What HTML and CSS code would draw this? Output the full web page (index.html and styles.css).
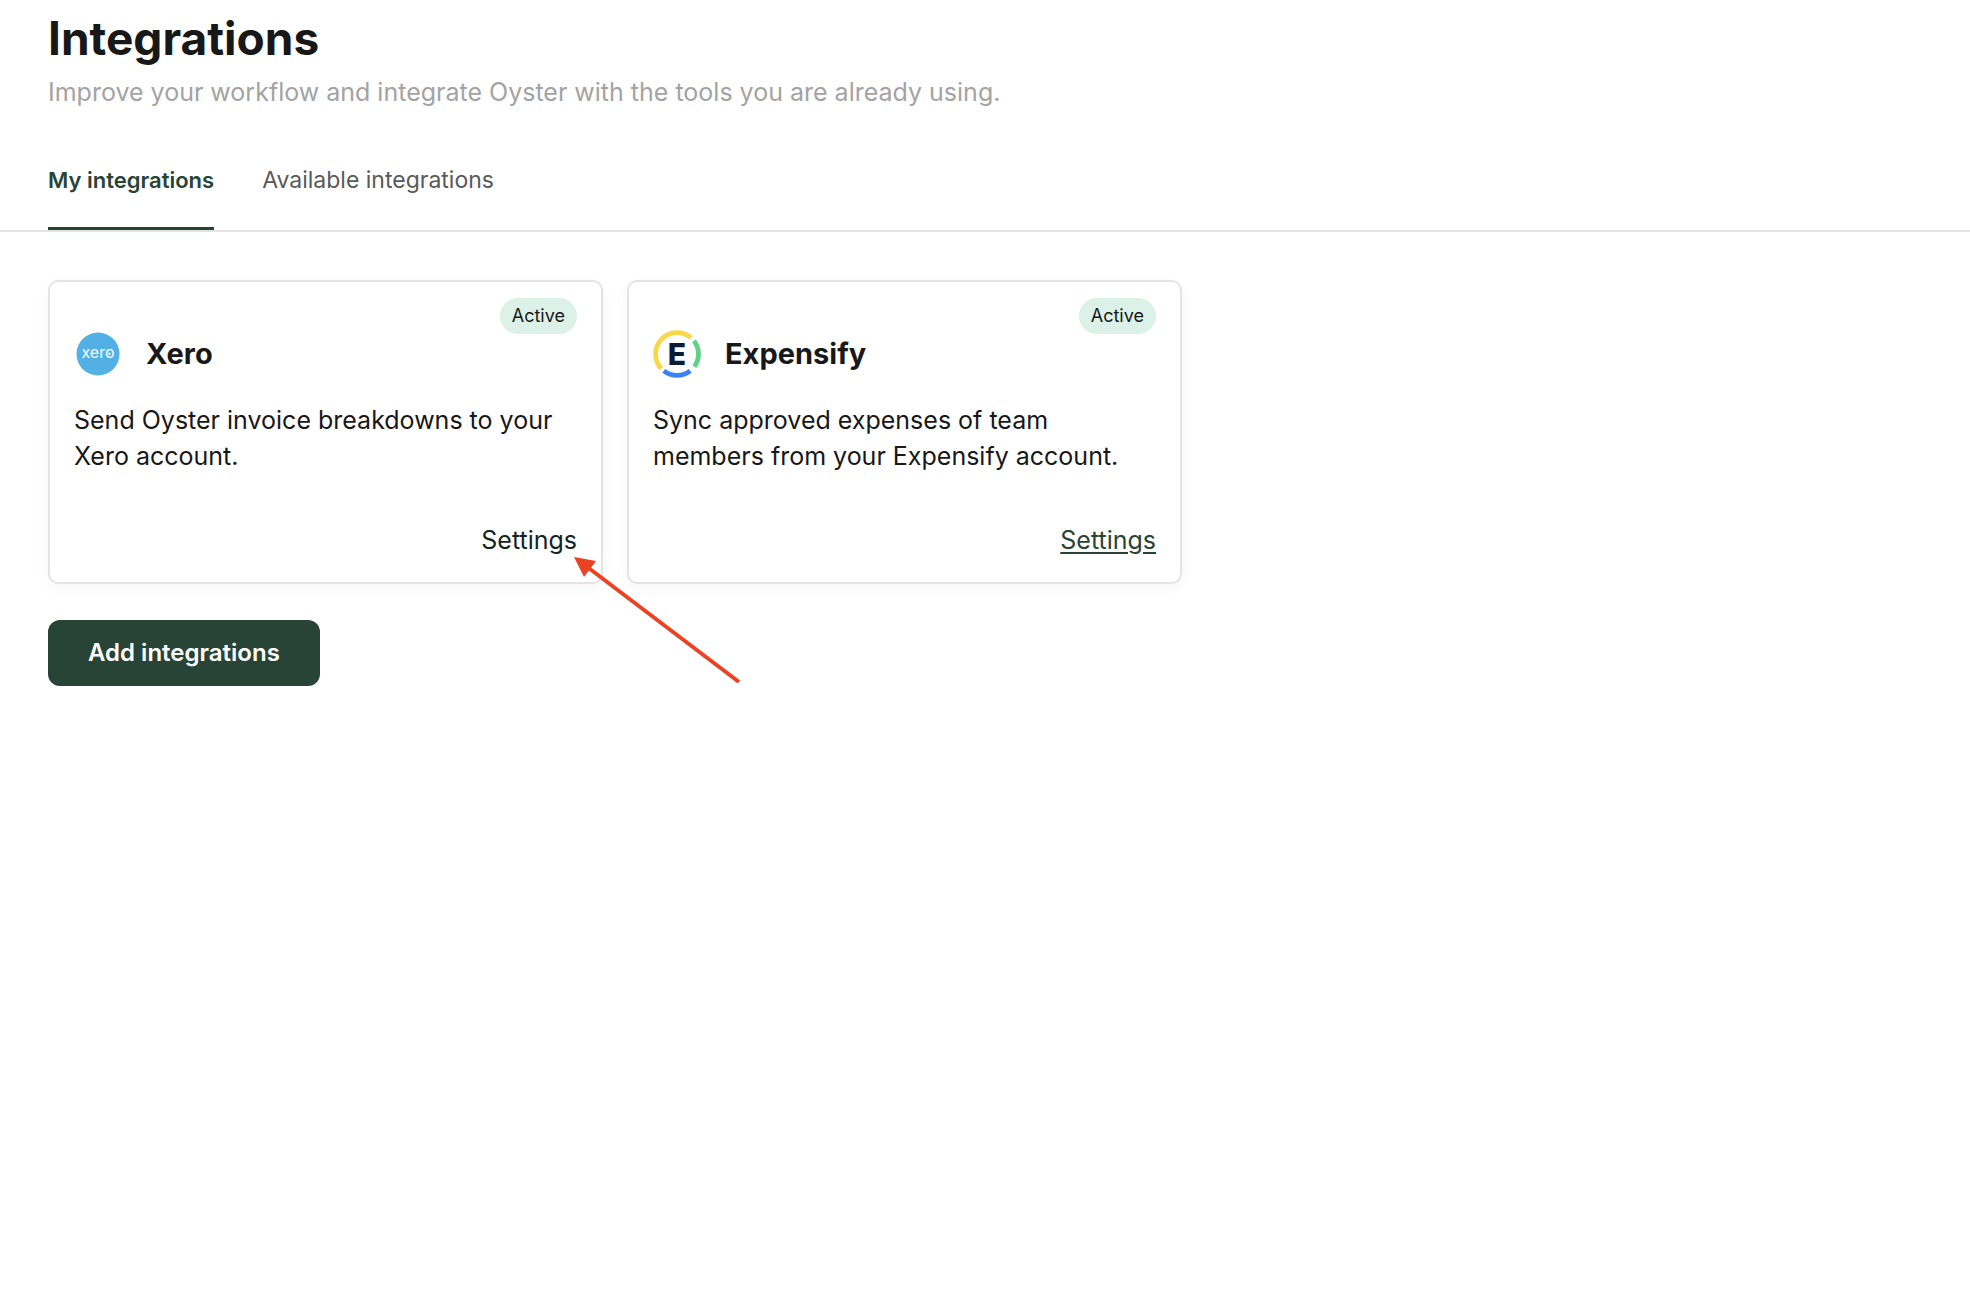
FILE: index.html
```
<!DOCTYPE html>
<html lang="en">

<head>
    <meta charset="utf-8" />
    <meta name="viewport" content="width=device-width, initial-scale=1.0">
    <title>Integrations</title>
    <link rel="stylesheet" href="styles.css">
</head>

<body>
    <header class="page-header">
        <h1 class="title">Integrations</h1>
        <p class="subtitle">Improve your workflow and integrate Oyster with the tools you are already using.</p>
    </header>

    <nav class="tabs">
        <a class="tab active" href="#my" aria-current="page">My integrations</a>
        <a class="tab" href="#available">Available integrations</a>
    </nav>

    <main class="content">
        <div class="cards">
            <article class="card">
                <span class="badge">Active</span>
                <div class="card-head">
                    <svg class="logo" viewBox="0 0 48 48" aria-hidden="true">
                        <circle cx="24" cy="24" r="21.5" fill="#52b0e5" />
                        <text class="xero-mark" x="24" y="28" text-anchor="middle">xero</text>
                        <circle cx="35.500" cy="23.700" r="1.200" fill="#fff" />
                    </svg>
                    <h2 class="name">Xero</h2>
                </div>
                <p class="description">Send Oyster invoice breakdowns to your Xero account.</p>
                <a class="settings hovered" href="#xero">Settings</a>
                <!-- arrow to the settings link -->
                <svg class="arrow" viewBox="0 0 170 130" aria-hidden="true">
                    <path d="M12 9L165 125" stroke="#ec4224" stroke-width="4" />
                    <path d="M0 0L22 4L10 20Z" fill="#ec4224" />
                </svg>
            </article>

            <article class="card">
                <span class="badge">Active</span>
                <div class="card-head">
                    <svg class="logo" viewBox="0 0 48 48" aria-hidden="true">
                        <g fill="none" stroke-width="4.8">
                            <path d="M8.300 38.700A21.500 21.500 0 0 1 38.100 7.800" stroke="#f8d849" />
                            <path d="M40.900 10.800A21.500 21.500 0 0 1 41.400 36.600" stroke="#5fd287" />
                            <path d="M10.800 40.900A21.500 21.500 0 0 0 37.200 40.900" stroke="#3b82f6" />
                        </g>
                        <text class="expensify-mark" x="24" y="35" text-anchor="middle">E</text>
                    </svg>
                    <h2 class="name">Expensify</h2>
                </div>
                <p class="description">Sync approved expenses of team members from your Expensify account.</p>
                <a class="settings" href="#expensify">Settings</a>
            </article>
        </div>

        <button class="add" type="button">Add integrations</button>
    </main>
</body>

</html>
```

FILE: styles.css
```
* {
    box-sizing: border-box;
}

body {
    margin: 0;
    background: #fff;
    color: #181818;
    font-family: Inter, "Liberation Sans", sans-serif;
    font-size: 25px;
    line-height: 36px;
}

h1,
h2,
p {
    margin: 0;
}

.page-header {
    padding: 8px 48px 0;
}

.title {
    font-size: 46px;
    line-height: 60px;
    font-weight: 700;
}

.subtitle {
    margin-top: 6px;
    color: #a3a3a3;
}

.tabs {
    display: flex;
    gap: 48px;
    margin-top: 36px;
    padding: 0 48px;
    border-bottom: 2px solid #e3e3e3;
}

.tab {
    padding: 16px 0 29px;
    border-bottom: 3px solid transparent;
    color: #595959;
    font-size: 23px;
    text-decoration: none;
}

.tab.active {
    border-bottom-color: #284437;
    color: #284437;
    font-size: 22px;
    font-weight: 600;
}

.content {
    padding: 48px;
}

.cards {
    display: flex;
    gap: 24px;
    max-width: 1134px;
}

.card {
    position: relative;
    display: flex;
    flex: 1;
    flex-direction: column;
    padding: 16px 24px 24px;
    border: 2px solid #e3e3e3;
    border-radius: 10px;
    box-shadow: 0 4px 16px rgba(0, 0, 0, 0.04);
}

.badge {
    align-self: flex-end;
    padding: 0 12px;
    border-radius: 18px;
    background: #dcf1e8;
    font-size: 18px;
}

.card-head {
    display: flex;
    align-items: center;
    gap: 24px;
    margin-top: -4px;
}

.logo {
    width: 48px;
    height: 48px;
}

.xero-mark {
    fill: #fff;
    font-size: 16px;
    font-weight: 400;
}

.expensify-mark {
    fill: #0b1b34;
    font-size: 30px;
    font-weight: 800;
}

.name {
    font-size: 29px;
    font-weight: 700;
}

.description {
    margin: 24px 0 48px;
}

.settings {
    align-self: flex-end;
    color: #284437;
    text-decoration-thickness: 2px;
    text-underline-offset: 3px;
}

.settings.hovered,
.settings:hover {
    color: #14251d;
    text-decoration: none;
}

.arrow {
    position: absolute;
    z-index: 1;
    right: -143px;
    bottom: -105px;
    width: 170px;
    height: 130px;
}

.add {
    margin-top: 36px;
    padding: 15px 40px;
    border: 0;
    border-radius: 12px;
    background: #284437;
    color: #fff;
    font: inherit;
    font-size: 24px;
    font-weight: 600;
    cursor: pointer;
}
```
